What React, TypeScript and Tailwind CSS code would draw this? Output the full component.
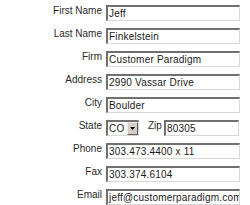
const fields: { label: string; value: string }[] = [
  { label: "First Name", value: "Jeff" },
  { label: "Last Name", value: "Finkelstein" },
  { label: "Firm", value: "Customer Paradigm" },
  { label: "Address", value: "2990 Vassar Drive" },
  { label: "City", value: "Boulder" },
];

const after: { label: string; value: string }[] = [
  { label: "Phone", value: "303.473.4400 x 11" },
  { label: "Fax", value: "303.374.6104" },
  { label: "Email", value: "jeff@customerparadigm.com" },
];

function Box({ value, className }: { value: string; className: string }) {
  return (
    <div
      className={`h-[16px] overflow-hidden whitespace-nowrap border-t-2 border-l-2 border-r border-b border-t-[#707070] border-l-[#707070] border-r-[#d8d8d8] border-b-[#d8d8d8] bg-white pl-[1px] pt-[1px] text-[10px] leading-[12px] tracking-[0.2px] text-[#1a1a1a] ${className}`}
    >
      {value}
    </div>
  );
}

function Label({ text, className = "" }: { text: string; className?: string }) {
  return <div className={`text-[10px] leading-[12px] text-[#2a2a2a] ${className}`}>{text}</div>;
}

export default function App() {
  return (
    <div className="w-[250px] h-[205px] bg-white pt-[5px] font-['Liberation_Sans',Arial,sans-serif]">
      {fields.map((f) => (
        <div key={f.label} className="flex h-[23px] items-start">
          <Label text={f.label} className="w-[102px] text-right" />
          <Box value={f.value} className="ml-[4px] w-[134px]" />
        </div>
      ))}

      <div className="flex h-[23px] items-start">
        <Label text="State" className="w-[102px] text-right" />
        <div className="ml-[4px] flex h-[16px] w-[33px] border-t-2 border-l-2 border-r border-b border-t-[#707070] border-l-[#707070] border-r-[#d8d8d8] border-b-[#d8d8d8] bg-white">
          <div className="flex-1 pl-[1px] pt-[1px] text-[10px] leading-[12px] tracking-[0.2px] text-[#1a1a1a]">CO</div>
          <div className="flex w-[11px] items-center justify-center border border-t-[#f0f0f0] border-l-[#f0f0f0] border-r-[#606060] border-b-[#606060] bg-[#d4d0c8]">
            <svg width="5" height="3" viewBox="0 0 5 3">
              <path d="M0 0h5L2.5 3z" fill="#000" />
            </svg>
          </div>
        </div>
        <Label text="Zip" className="ml-[9px] w-[16px]" />
        <Box value="80305" className="w-[75px]" />
      </div>

      {after.map((f) => (
        <div key={f.label} className="flex h-[23px] items-start">
          <Label text={f.label} className="w-[102px] text-right" />
          <Box value={f.value} className="ml-[4px] w-[134px]" />
        </div>
      ))}
    </div>
  );
}
